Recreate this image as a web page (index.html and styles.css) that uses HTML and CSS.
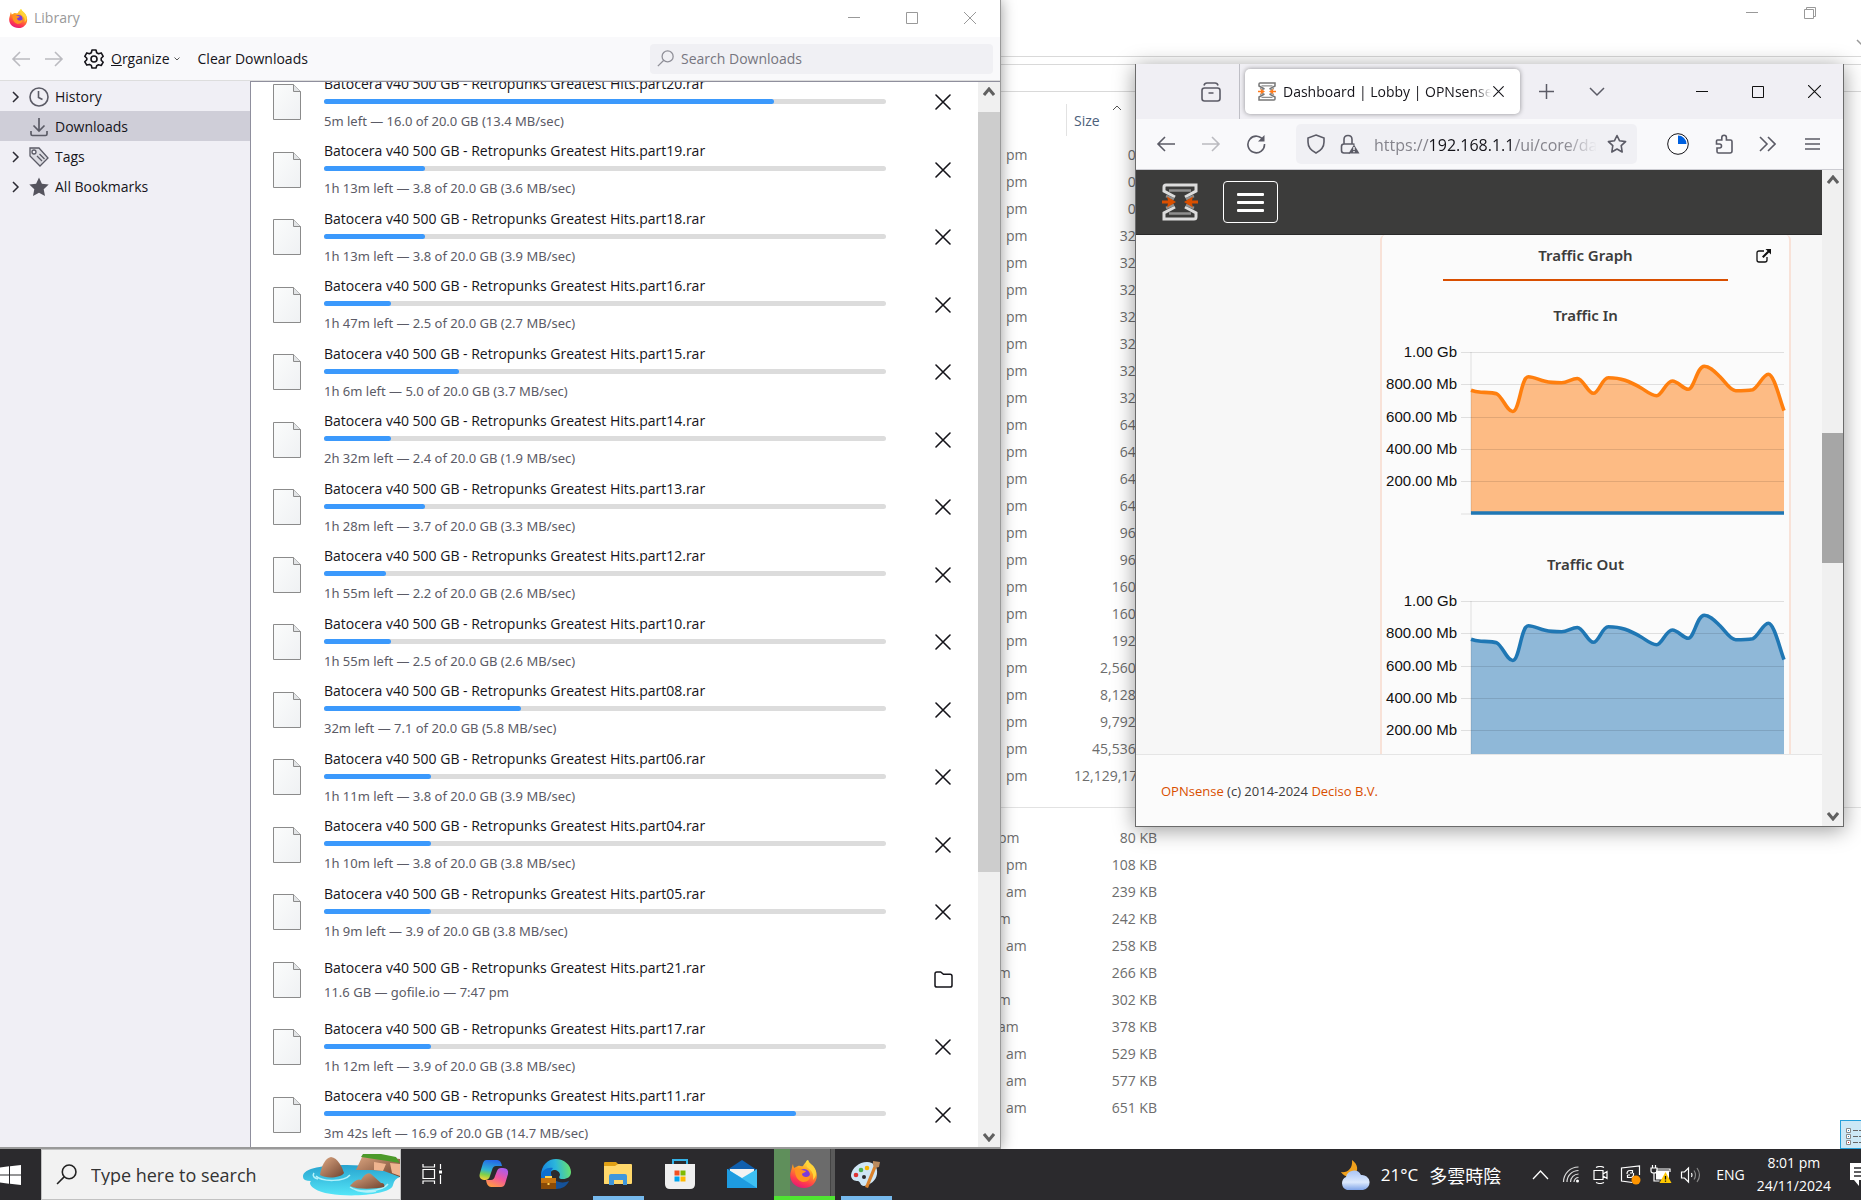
FILE: index.html
```html
<!DOCTYPE html>
<html lang="en">
<head>
    <meta charset="UTF-8">
    <meta name="viewport" content="width=device-width, initial-scale=1.0">
    <title>Desktop</title>
    <link rel="stylesheet" href="styles.css">
</head>
<body>
    <!-- shared shapes -->
    <svg class="defs" aria-hidden="true">
        <defs>
            <linearGradient id="ff-body" x1="0.7" y1="0" x2="0.3" y2="1">
                <stop offset="0" stop-color="#fff04a"/>
                <stop offset="0.4" stop-color="#ff9a1f"/>
                <stop offset="0.75" stop-color="#ff3b4e"/>
                <stop offset="1" stop-color="#e3167a"/>
            </linearGradient>
            <linearGradient id="page-fill" x1="0" y1="0" x2="1" y2="1">
                <stop offset="0" stop-color="#fbfcfc"/>
                <stop offset="1" stop-color="#eff1f3"/>
            </linearGradient>
            <symbol id="firefox" viewBox="0 0 28 28">
                <path fill="url(#ff-body)" d="M3 4c0 2 1 3 1 4l4-2c2-1 3 1 5 0 1-2 2-3 3-4 0-1 1-2 2-2 1 4 5 4 7 9 5 9-1 19-11 19S-2 20 1 11c1-3 1-5 2-7z"/>
                <circle cx="14" cy="15" r="6" fill="#7b3bdc"/>
                <path fill="#ff9420" d="M5 10c3-2 5-1 7 0l4 1c-1 2-4 2-4 3 0 2 2 3 4 3 2 0 4-1 4-3 1 5-2 8-7 8-5-1-8-5-8-12z"/>
                <path fill="#ffd43a" d="M17 4c1-2 1-3 1-4 1 4 5 5 7 9 2 4 1 8-2 11 1-6-1-9-5-12-1-1-2-2-1-4z"/>
            </symbol>
            <symbol id="page" viewBox="0 0 28 36">
                <path d="M.5.5h20l7 7v28H.5z" fill="url(#page-fill)" stroke="#8b8b8b"/>
                <path d="M20.500.5v7h7" fill="#e2e4e6" stroke="#8b8b8b"/>
            </symbol>
            <symbol id="x" viewBox="0 0 16 16">
                <path d="M1 1l14 14M15 1L1 15" fill="none" stroke="currentColor" stroke-width="1.600" stroke-linecap="round"/>
            </symbol>
            <symbol id="folder" viewBox="0 0 20 18">
                <path d="M3 1h4l3 2.500h7q2 0 2 2V15q0 2-2 2H3q-2 0-2-2V3q0-2 2-2z" fill="none" stroke="currentColor" stroke-width="1.600"/>
            </symbol>
            <symbol id="left" viewBox="0 0 20 18">
                <path d="M19 9H2M9 2L2 9l7 7" fill="none" stroke="currentColor" stroke-width="1.600"/>
            </symbol>
            <symbol id="right" viewBox="0 0 20 18">
                <path d="M1 9h17M11 2l7 7-7 7" fill="none" stroke="currentColor" stroke-width="1.600"/>
            </symbol>
            <symbol id="lens" viewBox="0 0 20 20">
                <circle cx="12.500" cy="7.500" r="6.500" fill="none" stroke="currentColor" stroke-width="1.500"/>
                <path d="M8 12l-7 7" stroke="currentColor" stroke-width="1.500"/>
            </symbol>
            <symbol id="win-min" viewBox="0 0 12 12"><path d="M0 5.500h12" stroke="currentColor"/></symbol>
            <symbol id="win-max" viewBox="0 0 12 12"><path d="M.5.5h11v11H.5z" fill="none" stroke="currentColor"/></symbol>
            <symbol id="win-close" viewBox="0 0 12 12"><path d="M0 0l12 12M12 0L0 12" stroke="currentColor"/></symbol>
            <symbol id="win-restore" viewBox="0 0 12 12"><path d="M.5 2.500h9v9h-9zM2.500 2.500v-2h9v9h-2" fill="none" stroke="currentColor"/></symbol>
            <symbol id="scroll-up" viewBox="0 0 12 10"><path d="M1 8l5-6 5 6" fill="none" stroke="#606060" stroke-width="3"/></symbol>
            <symbol id="scroll-down" viewBox="0 0 12 10"><path d="M1 2l5 6 5-6" fill="none" stroke="#606060" stroke-width="3"/></symbol>
            <symbol id="twisty" viewBox="0 0 8 12"><path d="M1 1l5 5-5 5" fill="none" stroke="#2b2a33" stroke-width="1.500"/></symbol>
            <symbol id="opn" viewBox="0 0 36 38">
                <path d="M13 14L2 8V4q0-2 2-2h30v6l-11 6M13 24L2 30v6h30q2 0 2-2v-4l-11-6" fill="none" stroke="var(--frame)" stroke-width="3"/>
                <path d="M7 7.500h22M7 30.500h22M4 13l8 3M32 13l-8 3M4 25l8-3M32 25l-8-3" stroke="#8f8f8f" stroke-width="2.500"/>
                <path d="M0 17.500h6l-1-4 9 5.500-9 5.500 1-4H0zM36 17.500h-6l1-4-9 5.500 9 5.500-1-4h6z" fill="var(--arrow)"/>
            </symbol>
            <g id="grid">
                <path d="M79 12.500h323M79 44.500h323M79 77.500h323M79 109.500h323M79 141.500h323M79 174h323M89 12v162" stroke="rgba(0,0,0,0.110)"/>
                <g font-size="15" text-anchor="end" fill="#111">
                    <text x="75" y="17">1.00 Gb</text>
                    <text x="75" y="49">800.00 Mb</text>
                    <text x="75" y="82">600.00 Mb</text>
                    <text x="75" y="114">400.00 Mb</text>
                    <text x="75" y="146">200.00 Mb</text>
                </g>
            </g>
            <path id="curve" d="M89 50.300C91 51 94 51.800 99 52.200 104 52.500 111 52.500 114.700 53.800 120 56 125 71.500 130.700 71.500 137.500 71.500 139 36.700 146.300 36.700 152 36.700 157 40 163 41.300 168 42.500 174 42.800 179.700 42.800 185 42.800 190 38.500 195.300 38.500 201 38.500 206 53.300 211.300 53.300 217 53.300 220 37.700 226.300 37.700 232 37.700 238 38.500 243 40.300 248 42 253 44.500 258.700 47.700 264 50.700 269 55.700 274.700 55.700 280 55.700 284 41 290.300 41 296 41 301 49.300 306.300 49.300 312 49.300 315 26.300 322.300 26.300 328 26.300 333 32 338 36.700 343 41.500 348 50.700 353.700 50.700 359 50.700 365 50.700 370.700 49.700 376 48 381 34.300 386.300 34.300 392 34.300 397 57 402 70.700"/>
            <path id="area" d="M89 50.300C91 51 94 51.800 99 52.200 104 52.500 111 52.500 114.700 53.800 120 56 125 71.500 130.700 71.500 137.500 71.500 139 36.700 146.300 36.700 152 36.700 157 40 163 41.300 168 42.500 174 42.800 179.700 42.800 185 42.800 190 38.500 195.300 38.500 201 38.500 206 53.300 211.300 53.300 217 53.300 220 37.700 226.300 37.700 232 37.700 238 38.500 243 40.300 248 42 253 44.500 258.700 47.700 264 50.700 269 55.700 274.700 55.700 280 55.700 284 41 290.300 41 296 41 301 49.300 306.300 49.300 312 49.300 315 26.300 322.300 26.300 328 26.300 333 32 338 36.700 343 41.500 348 50.700 353.700 50.700 359 50.700 365 50.700 370.700 49.700 376 48 381 34.300 386.300 34.300 392 34.300 397 57 402 70.700V174H89z"/>
        </defs>
    </svg>

    <main class="desktop">
        <!-- file explorer, behind the other windows -->
        <section class="explorer">
            <div class="explorer-title">
                <button aria-label="Minimize"><svg width="12" height="12"><use href="#win-min"/></svg></button>
                <button aria-label="Restore"><svg width="12" height="12"><use href="#win-restore"/></svg></button>
            </div>
            <div class="explorer-ribbon">
                <svg width="10" height="8" viewBox="0 0 10 8"><path d="M1 1l5 5 5-5" fill="none" stroke="#999" stroke-width="1.500"/></svg>
            </div>
            <div class="explorer-gap"></div>
            <div class="explorer-path"></div>
            <table class="files">
                <thead>
                    <tr>
                        <th class="col-date"></th>
                        <th class="col-size"><svg class="sort" width="10" height="6" viewBox="0 0 10 6"><path d="M1 5l4-4 4 4" fill="none" stroke="#555"/></svg>Size</th>
                        <th></th>
                    </tr>
                </thead>
                <tbody id="files-top"></tbody>
                <tbody><tr class="divider"><td colspan="3"></td></tr></tbody>
                <tbody id="files-bottom"></tbody>
            </table>
            <div class="view-toggle">
                <svg width="20" height="20" viewBox="0 0 20 20">
                    <path d="M1.500 1.500h4v4h-4zM1.500 7.500h4v4h-4zM1.500 13.500h4v4h-4z" fill="#fff" stroke="#888"/>
                    <path d="M8 3.500h5M14 3.500h6M8 9.500h5M14 9.500h6M8 15.500h5M14 15.500h6" stroke="#666"/>
                    <path d="M3 3h1v1H3zM3 9h1v1H3z" fill="#2a7fb8"/><path d="M3 15h1v1H3z" fill="#c22"/>
                </svg>
            </div>
        </section>

        <!-- firefox downloads library -->
        <section class="library">
            <header class="lib-title">
                <svg width="19" height="19"><use href="#firefox"/></svg>
                <span>Library</span>
                <div class="lib-controls">
                    <button aria-label="Minimize"><svg width="12" height="12"><use href="#win-min"/></svg></button>
                    <button aria-label="Maximize"><svg width="12" height="12"><use href="#win-max"/></svg></button>
                    <button aria-label="Close"><svg width="12" height="12"><use href="#win-close"/></svg></button>
                </div>
            </header>
            <div class="lib-toolbar">
                <button class="dim" aria-label="Back"><svg width="20" height="18"><use href="#left"/></svg></button>
                <button class="dim" aria-label="Forward"><svg width="20" height="18"><use href="#right"/></svg></button>
                <button class="organize">
                    <svg width="20" height="20" viewBox="0 0 20 20" fill="none" stroke="#15141a" stroke-width="1.600" stroke-linejoin="round">
                        <path d="M8 1h4l.7 2.700 1.800 1 2.700-.8 2 3.400-2 2v1.900l2 2-2 3.300-2.700-.7-1.800 1L12 19H8l-.7-2.600-1.800-1-2.700.7-2-3.300 2-2V9.300l-2-2 2-3.400 2.700.8 1.800-1z"/>
                        <circle cx="10" cy="10" r="3"/>
                    </svg>
                    <span><u>O</u>rganize</span>
                    <svg width="6" height="4" viewBox="0 0 6 4"><path d="M.5.5L3 3 5.500.5" fill="none" stroke="#555"/></svg>
                </button>
                <button class="clear">Clear Downloads</button>
                <label class="lib-search">
                    <svg width="17" height="17"><use href="#lens"/></svg>
                    <input type="text" placeholder="Search Downloads" aria-label="Search Downloads">
                </label>
            </div>
            <div class="lib-body">
                <nav class="tree">
                    <a href="#"><svg class="twisty" width="8" height="12"><use href="#twisty"/></svg>
                        <svg width="20" height="20" viewBox="0 0 20 20" fill="none" stroke="#5b5b66" stroke-width="1.600"><circle cx="10" cy="10" r="9"/><path d="M9.500 4v6.500l4 2"/></svg>History</a>
                    <a href="#" class="current"><i class="twisty"></i>
                        <svg width="20" height="20" viewBox="0 0 20 20" fill="none" stroke="#5b5b66" stroke-width="1.700"><path d="M10 1v13M4.500 8.500L10 14l5.500-5.500M2 14v3q0 1.500 1.500 1.500h13Q18 18.500 18 17v-3"/></svg>Downloads</a>
                    <a href="#"><svg class="twisty" width="8" height="12"><use href="#twisty"/></svg>
                        <svg width="20" height="20" viewBox="0 0 20 20" fill="#dcdce2" stroke="#5b5b66" stroke-width="1.300"><path d="M1 1h9l9 10-8 8L1 9z"/><circle cx="5" cy="5" r="2" fill="#f0eff5"/><path d="M8 9l5 5M10.500 7l5 5"/></svg>Tags</a>
                    <a href="#"><svg class="twisty" width="8" height="12"><use href="#twisty"/></svg>
                        <svg width="20" height="20" viewBox="0 0 20 20" fill="#55545e"><path d="M10 .5l2.900 6.200 6.800.8-5 4.700 1.300 6.800-6-3.300L4 19l1.300-6.800-5-4.700 6.800-.8z"/></svg>All Bookmarks</a>
                </nav>
                <ul class="downloads" id="downloads"></ul>
                <div class="scrollbar lib-scroll">
                    <svg width="12" height="10"><use href="#scroll-up"/></svg>
                    <div class="thumb"></div>
                    <svg class="end" width="12" height="10"><use href="#scroll-down"/></svg>
                </div>
            </div>
        </section>

        <!-- OPNsense dashboard -->
        <section class="browser">
            <header class="tabs">
                <div class="view-pin">
                    <button aria-label="Firefox View">
                        <svg width="20" height="20" viewBox="0 0 20 20" fill="none" stroke="#5b5b66" stroke-width="1.600"><rect x="1" y="6" width="18" height="13" rx="2.500"/><path d="M3 3.500Q3.500 1 6 1h8q2.500 0 3 2.500M7.500 11h5"/></svg>
                    </button>
                </div>
                <div class="tab">
                    <svg class="fav" width="18" height="19"><use href="#opn"/></svg>
                    <span>Dashboard | Lobby | OPNsense.localdomain</span>
                    <button aria-label="Close tab"><svg width="11" height="11"><use href="#x"/></svg></button>
                </div>
                <button class="new-tab" aria-label="New tab"><svg width="15" height="15" viewBox="0 0 15 15"><path d="M7.500 0v15M0 7.500h15" stroke="#5b5b66" stroke-width="1.500"/></svg></button>
                <button class="all-tabs" aria-label="List all tabs"><svg width="16" height="10" viewBox="0 0 16 10"><path d="M1 1l7 7 7-7" fill="none" stroke="#5b5b66" stroke-width="1.500"/></svg></button>
                <div class="win-controls">
                    <button aria-label="Minimize"><svg width="12" height="12"><use href="#win-min"/></svg></button>
                    <button aria-label="Maximize"><svg width="12" height="12"><use href="#win-max"/></svg></button>
                    <button aria-label="Close"><svg width="13" height="13"><use href="#win-close"/></svg></button>
                </div>
            </header>
            <div class="nav">
                <button aria-label="Back"><svg width="20" height="18"><use href="#left"/></svg></button>
                <button class="dim" aria-label="Forward"><svg width="20" height="18"><use href="#right"/></svg></button>
                <button aria-label="Reload"><svg width="20" height="20" viewBox="0 0 20 20"><path d="M17.500 6.500A8.300 8.300 0 1 0 18.500 10" fill="none" stroke="#5b5b66" stroke-width="1.600"/><path d="M18.500 1v6.500H12z" fill="#5b5b66"/></svg></button>
                <div class="urlbar">
                    <svg width="20" height="20" viewBox="0 0 20 20" fill="none" stroke="#5b5b66" stroke-width="1.600"><path d="M10 1l8 3v4c0 5-3 8.500-8 11-5-2.500-8-6-8-11V4z"/></svg>
                    <svg width="20" height="20" viewBox="0 0 20 20" fill="none" stroke="#5b5b66" stroke-width="1.600"><path d="M10 19H4q-2.500 0-2.500-2.500v-4Q1.500 10 4 10h9q1 0 1.500.5M4 10V5.500q0-4 4-4t4 4V10"/><path d="M14 10.500l5.500 9h-11z" fill="#5b5b66" stroke="none"/><path d="M14 13v3M14 17v1.300" stroke="#fff" stroke-width="1.300"/></svg>
                    <a class="url" href="#">https://<b>192.168.1.1</b>/ui/core/dashboard</a>
                    <button aria-label="Bookmark"><svg width="20" height="20" viewBox="0 0 20 20" fill="none" stroke="#5b5b66" stroke-width="1.600" stroke-linejoin="round"><path d="M10 1.500l2.600 5.300 6 .8-4.400 4 1 6.400-5.200-3L4.800 18l1-6.400-4.400-4 6-.8z"/></svg></button>
                </div>
                <button aria-label="Downloads"><svg width="22" height="22" viewBox="0 0 22 22"><circle cx="11" cy="11" r="10.300" fill="#fff" stroke="#15141a"/><path d="M11 2.500a8.500 8.500 0 0 1 8.500 8.500H11z" fill="#0061e0"/></svg></button>
                <button aria-label="Extensions"><svg width="20" height="20" viewBox="0 0 20 20" fill="none" stroke="#5b5b66" stroke-width="1.600"><path d="M3.500 6h4.300V3.500a2.300 2.300 0 0 1 4.600 0V6h4q1.600 0 1.600 1.600V17q0 2-2 2H4.500Q3 19 3 17.500V14h2.500a2 2 0 0 0 0-4H2.500V7q0-1 1-1z"/></svg></button>
                <button aria-label="More tools"><svg width="17" height="16" viewBox="0 0 17 16" fill="none" stroke="#5b5b66" stroke-width="1.600"><path d="M1 1l7 7-7 7M9 1l7 7-7 7"/></svg></button>
                <button class="menu" aria-label="Menu"><svg width="15" height="14" viewBox="0 0 15 14"><path d="M0 2h15M0 7h15M0 12h15" stroke="#5b5b66" stroke-width="1.600"/></svg></button>
            </div>
            <div class="viewport">
                <div class="page">
                    <div class="navbar">
                        <svg class="brand" width="36" height="38"><use href="#opn"/></svg>
                        <button class="toggle" aria-label="Toggle navigation"><i></i><i></i><i></i></button>
                    </div>
                    <div class="content">
                        <article class="card">
                            <div class="card-head">
                                <h2>Traffic Graph</h2>
                                <a href="#" aria-label="Open"><svg width="15" height="14" viewBox="0 0 15 14"><path d="M8 2H3Q1 2 1 4v7q0 2 2 2h6q2 0 2-2V8" fill="none" stroke="#111" stroke-width="1.300"/><path d="M9.500 0H15v5.500l-2-2-5.500 5.500L6 7.500 11.500 2z" fill="#111"/></svg></a>
                            </div>
                            <h3>Traffic In</h3>
                            <svg class="chart" viewBox="0 0 407 184">
                                <use href="#area" fill="#fdbb84"/>
                                <use href="#grid"/>
                                <use href="#curve" fill="none" stroke="#ff7f0e" stroke-width="3.600"/>
                                <path d="M89 173h313" stroke="#1f77b4" stroke-width="3.600"/>
                            </svg>
                            <h3>Traffic Out</h3>
                            <svg class="chart" viewBox="0 0 407 184">
                                <use href="#area" fill="#8fb8d8"/>
                                <use href="#grid"/>
                                <use href="#curve" fill="none" stroke="#1f77b4" stroke-width="3.600"/>
                            </svg>
                        </article>
                    </div>
                    <footer><a href="#">OPNsense</a> (c) 2014-2024 <a href="#">Deciso B.V.</a></footer>
                </div>
                <div class="scrollbar page-scroll">
                    <svg width="12" height="10"><use href="#scroll-up"/></svg>
                    <div class="thumb"></div>
                    <svg class="end" width="12" height="10"><use href="#scroll-down"/></svg>
                </div>
            </div>
        </section>
    </main>

    <footer class="taskbar">
        <button class="start" aria-label="Start"><svg width="21" height="20" viewBox="0 0 21 20" fill="#fff"><path d="M0 2.500l9-1.200V9.500H0zM10 1.200L21 0v9.500H10zM0 10.500h9v8.200l-9-1.200zM10 10.500h11V20l-11-1.300z"/></svg></button>
        <label class="task-search">
            <svg width="21" height="21"><use href="#lens"/></svg>
            <input type="text" placeholder="Type here to search" aria-label="Type here to search">
            <svg class="sea" width="98" height="44" viewBox="0 0 98 44">
                <defs><linearGradient id="water" x1="0" y1="0" x2="0" y2="1"><stop offset="0" stop-color="#27a3cf"/><stop offset="1" stop-color="#55e6f8"/></linearGradient>
                <linearGradient id="rock" x1="0" y1="0" x2="1" y2="1"><stop offset="0" stop-color="#e0a983"/><stop offset="1" stop-color="#6f4330"/></linearGradient></defs>
                <path d="M1 24C0 15 22 12 45 12l53 2v10q-6 2-7 8c-2 12-64 14-78 4-5-3-6-6-4-8Q1 28 1 24z" fill="url(#water)"/>
                <path d="M14 23c6 6 28 6 34-1M12 20c-2 3 0 5 4 6M48 34c8 6 32 5 38-3M52 36c4 3 16 4 22 2" fill="none" stroke="#b5f2fa" stroke-width="1.500"/>
                <path d="M18 22c1-8 5-17 11-18 7 1 11 10 13 16-3 5-18 6-24 2z" fill="url(#rock)"/>
                <path d="M54 17l6-13 2-3 36 5v18l-16-6-12-1z" fill="url(#rock)"/>
                <path d="M72 9l12 2-3 7-9-1zM88 10l10 1v12l-8-3z" fill="#efb48f"/>
                <path d="M59 4l2-3 18 0 15 3 4 6c-12-2-26-4-39-6z" fill="#4c9a2b"/>
                <path d="M48 33c3-4 8-8 11-6 3-5 7-8 10-6l10 9c3 0 4 2 3 4-9 2-26 3-34-1z" fill="url(#rock)"/>
            </svg>
        </label>
        <nav class="apps">
            <button aria-label="Task View"><svg width="21" height="20" viewBox="0 0 21 20" fill="none" stroke="#fff" stroke-width="1.200"><path d="M1 5.500h11.500v9H1zM1 0v3h11.500V0M1 20v-3h11.500v3M18.500 0v5M18.500 11v9"/><path d="M17 6.500h3v3h-3z" fill="#fff" stroke="none"/></svg></button>
            <button aria-label="Copilot"><svg width="30" height="28" viewBox="0 0 30 28">
                <defs><linearGradient id="cp1" x1="0.500" y1="0" x2="0.300" y2="1"><stop offset="0" stop-color="#2468e8"/><stop offset="0.500" stop-color="#2fb4d4"/><stop offset="0.750" stop-color="#7ed04a"/><stop offset="1" stop-color="#f5d13a"/></linearGradient>
                <linearGradient id="cp2" x1="0.800" y1="0" x2="0.300" y2="1"><stop offset="0" stop-color="#a65cf0"/><stop offset="0.500" stop-color="#f0569f"/><stop offset="1" stop-color="#ff9a45"/></linearGradient></defs>
                <path d="M7 0h11q4 0 5 6h-6q-3 0-4 4l-2 6q-1 4-5 4H5Q-1 19 1 13L4 3q1-3 3-3z" fill="url(#cp1)"/>
                <path d="M24 8q6 0 5 6l-3 10q-1 3-4 3H12q-4 0-5-7h5q3 0 4-4l2-5q1-3 4-3z" fill="url(#cp2)"/></svg></button>
            <button aria-label="Edge"><svg width="30" height="30" viewBox="0 0 30 30">
                <defs><linearGradient id="ed" x1="0" y1="0.500" x2="1" y2="0.400"><stop offset="0" stop-color="#1586e0"/><stop offset="0.500" stop-color="#2bb6dc"/><stop offset="1" stop-color="#6ae36a"/></linearGradient></defs>
                <path d="M0 17C0 6 7 0 15 0s15 6 15 13c0 5-4 7-8 7-5 0-4-2-3-4 0-3-3-5-6-5s-5 4-5 8z" fill="url(#ed)"/>
                <path d="M0 17C1 11 6 8 12 9c-3 3-2 6-1 9l2 10H5Q0 24 0 17z" fill="#0d6fd0"/>
                <path d="M13 21c5 3 11 3 15 1-2 5-7 8-13 8z" fill="#15529a"/>
                <path d="M0 19h15v11H0z" fill="#c67410"/><path d="M0 24h15v6H0z" fill="#8a4b08"/><path d="M4 19v-2h7v2M6.500 24h2v2h-2z" fill="#ffd250"/></svg></button>
            <button class="open" aria-label="File Explorer"><svg width="28" height="24" viewBox="0 0 28 24">
                <path d="M0 1q0-1 1-1h11l2 2h13v20H0z" fill="#e0a014"/><path d="M0 4h11l3-2h13q1 0 1 1v18q0 1-1 1H1q-1 0-1-1z" fill="#ffd86b"/><path d="M5 14q0-2 2-2h14q2 0 2 2v9h-4v-5h-9v5H5z" fill="#3f97dc"/></svg></button>
            <button aria-label="Microsoft Store"><svg width="30" height="30" viewBox="0 0 30 30">
                <path d="M8 6V1h14v5" fill="none" stroke="#35b3e8" stroke-width="2"/><path d="M0 5h30v20q0 5-5 5H5q-5 0-5-5z" fill="#efefef"/>
                <path d="M9.500 11.500h5v5h-5z" fill="#f25022"/><path d="M15.500 11.500h5v5h-5z" fill="#7fba00"/><path d="M9.500 17.500h5v5h-5z" fill="#00a4ef"/><path d="M15.500 17.500h5v5h-5z" fill="#ffb900"/></svg></button>
            <button aria-label="Mail"><svg width="30" height="28" viewBox="0 0 30 28"><path d="M0 10L15 0l15 10z" fill="#0f5fae"/><path d="M3 9h24v9H3z" fill="#f3f3f3"/><path d="M0 9l15 9 15-9v19H0z" fill="#3ec0f3"/><path d="M0 9l30 19H0z" fill="#1e9be0"/></svg></button>
            <button class="active" aria-label="Firefox"><svg width="28" height="28"><use href="#firefox"/></svg></button>
            <button class="open" aria-label="Paint"><svg width="30" height="28" viewBox="0 0 30 28">
                <path d="M16 2c7 0 11 5 10 12-1 7-7 11-13 12-4 0-3-4-6-5-3 0-7-1-7-6C1 8 8 2 16 2z" fill="#cfe6f5"/>
                <circle cx="5" cy="15" r="2.300" fill="#d33"/><circle cx="10" cy="10" r="2.300" fill="#4caf50"/><circle cx="16" cy="8" r="2.300" fill="#f5b400"/><circle cx="13" cy="17" r="2" fill="#2b2b2e"/>
                <path d="M26 6L17 28l-3-1 9-22z" fill="#d9812b"/><path d="M22 1l7 1-1 5-4 1-2-3z" fill="#b98a5e"/></svg></button>
        </nav>
        <div class="tray">
            <button class="weather">
                <svg width="30" height="30" viewBox="0 0 30 30"><defs><linearGradient id="cl" x1="0" y1="0" x2="0" y2="1"><stop offset="0" stop-color="#a9c4f5"/><stop offset="0.600" stop-color="#dce9fd"/><stop offset="1" stop-color="#7fa4e8"/></linearGradient></defs>
                <path d="M12 0c6 4 7 11 2 15-4 3-10 2-13-3 6 1 12-3 11-12z" fill="#f0a01c"/><path d="M7 30a7 7 0 0 1-1-13 8 8 0 0 1 15-2 7.500 7.500 0 0 1 2 15z" fill="url(#cl)"/></svg>
                <span>21°C</span><span class="sky">多雲時陰</span>
            </button>
            <button class="more" aria-label="Show hidden icons"><svg width="17" height="10" viewBox="0 0 17 10"><path d="M1 9l7.500-8L16 9" fill="none" stroke="#fff" stroke-width="1.300"/></svg></button>
            <svg class="status-icon" height="17" viewBox="0 0 17 17" fill="none" stroke="#ddd" stroke-width="1.200"><path d="M1 16A15 15 0 0 1 16 1M4.500 16A11.500 11.500 0 0 1 16 4.500M8 16a8 8 0 0 1 8-8M11.500 16a4.500 4.500 0 0 1 4.500-4.500"/><circle cx="15" cy="15" r="1.500" fill="#fff" stroke="none"/></svg>
            <svg class="status-icon" height="18" viewBox="0 0 16 18" fill="none" stroke="#fff" stroke-width="1.200"><path d="M1 4.500h9v9H1zM10 8l4-2.500v7L10 10M3 1.500q4-2 8 0M3 16.500q4 2 8 0"/></svg>
            <svg class="status-icon" height="20" viewBox="0 0 21 20" fill="none" stroke="#fff" stroke-width="1.200"><path d="M12 17.500L1 16V3l18-2v9M6.500 9q0-3.500 3-3.500h2.500V8M12 8H9.500M13 8q.5 4.500-3 4.500H7V10M7 10h2.500"/><circle cx="15.500" cy="15" r="4.500" fill="#ff9500" stroke="none"/></svg>
            <svg class="status-icon" height="19" viewBox="0 0 21 19"><path d="M5.500 5.500h13v9h-13z" fill="#fff"/><path d="M7 4h12.500v3M2 0v3M5 0v3M.5 3h6v3q0 2-3 2t-3-2zM3.500 8v8H9" fill="none" stroke="#fff" stroke-width="1.200"/><path d="M15 7l6 11H9z" fill="#ffc800"/><path d="M15 11v3.500M15 15.500v1.300" stroke="#111" stroke-width="1.300"/></svg>
            <svg class="status-icon" height="18" viewBox="0 0 21 18" fill="none" stroke="#fff" stroke-width="1.200"><path d="M1 6h3l4-4v14l-4-4H1zM11 7q1 2 0 4"/><path d="M13.500 4.500q3 4.500 0 9M16.500 2q5 7 0 14" stroke="#888"/></svg>
            <span class="lang">ENG</span>
            <button class="clock"><span>8:01 pm</span><span>24/11/2024</span></button>
            <svg width="11" height="24" viewBox="0 0 11 24"><path d="M0 0h20v17H9v6l-5-6H0z" fill="#fff"/><path d="M4 5h10M4 9h10M4 13h10" stroke="#2b2b2e" stroke-width="1.500"/></svg>
        </div>
    </footer>

    <script>
        (function(d){
            // part number, status line, percent (-1 = finished)
            var items = [
                ['20', '5m left — 16.0 of 20.0 GB (13.4 MB/sec)', 80],
                ['19', '1h 13m left — 3.8 of 20.0 GB (3.6 MB/sec)', 18],
                ['18', '1h 13m left — 3.8 of 20.0 GB (3.9 MB/sec)', 18],
                ['16', '1h 47m left — 2.5 of 20.0 GB (2.7 MB/sec)', 12],
                ['15', '1h 6m left — 5.0 of 20.0 GB (3.7 MB/sec)', 24],
                ['14', '2h 32m left — 2.4 of 20.0 GB (1.9 MB/sec)', 12],
                ['13', '1h 28m left — 3.7 of 20.0 GB (3.3 MB/sec)', 18],
                ['12', '1h 55m left — 2.2 of 20.0 GB (2.6 MB/sec)', 11],
                ['10', '1h 55m left — 2.5 of 20.0 GB (2.6 MB/sec)', 12],
                ['08', '32m left — 7.1 of 20.0 GB (5.8 MB/sec)', 35],
                ['06', '1h 11m left — 3.8 of 20.0 GB (3.9 MB/sec)', 19],
                ['04', '1h 10m left — 3.8 of 20.0 GB (3.8 MB/sec)', 19],
                ['05', '1h 9m left — 3.9 of 20.0 GB (3.8 MB/sec)', 19],
                ['21', '11.6 GB — gofile.io — 7:47 pm', -1],
                ['17', '1h 12m left — 3.9 of 20.0 GB (3.8 MB/sec)', 19],
                ['11', '3m 42s left — 16.9 of 20.0 GB (14.7 MB/sec)', 84]
            ];
            var html = '', i, it, name, done;
            for (i = 0; i < items.length; i++) {
                it = items[i];
                done = it[2] < 0;
                name = 'Batocera v40 500 GB - Retropunks Greatest Hits.part' + it[0] + '.rar';
                html += '<li' + (done ? ' class="done"' : '') + '>' +
                    '<svg width="28" height="36"><use href="#page"/></svg>' +
                    '<div class="info"><span class="name">' + name + '</span>' +
                    (done ? '' : '<progress max="100" value="' + it[2] + '" aria-label="' + name + '"></progress>') +
                    '<span class="status">' + it[1] + '</span></div>' +
                    (done ? '<button aria-label="Show in folder"><svg width="19" height="17"><use href="#folder"/></svg></button>'
                          : '<button aria-label="Cancel"><svg width="16" height="16"><use href="#x"/></svg></button>') +
                    '</li>';
            }
            d.getElementById('downloads').innerHTML = html;

            function rows(id, list) {
                var out = '';
                list.forEach(function(r) {
                    out += '<tr><td class="col-date ' + (r[2] || '') + '">' + r[0] + '</td><td class="col-size">' + r[1] + ' KB</td><td></td></tr>';
                });
                d.getElementById(id).innerHTML = out;
            }
            rows('files-top', ['0', '0', '0', '32', '32', '32', '32', '32', '32', '32', '64', '64', '64', '64', '96', '96',
                '160', '160', '192', '2,560', '8,128', '9,792', '45,536', '12,129,170'].map(function(s) { return ['pm', s]; }));
            rows('files-bottom', [
                ['pm', '80', 'short'], ['pm', '108'], ['am', '239'], ['am', '242', 'shorter'], ['am', '258'],
                ['am', '266', 'shorter'], ['am', '302', 'shorter'], ['am', '378', 'short'], ['am', '529'], ['am', '577'], ['am', '651']
            ]);
        })(document);
    </script>
</body>
</html>
```
FILE: styles.css
```css
*{
    box-sizing: border-box;
}
body{
    margin: 0;
    height: 100vh;
    display: flex;
    flex-direction: column;
    overflow: hidden;
    font-family: "Open Sans", "Noto Sans", sans-serif;
    font-size: 14px;
    line-height: 20px;
    color: #15141a;
}
button{
    display: flex;
    align-items: center;
    justify-content: center;
    padding: 0;
    border: 0;
    background: none;
    font: inherit;
    color: inherit;
}
input{
    flex: 1;
    min-width: 0;
    padding: 0;
    border: 0;
    outline: 0;
    background: none;
    font: inherit;
}
svg{
    flex: none;
    display: block;
}
a{
    text-decoration: none;
    color: inherit;
}
.defs{
    position: absolute;
    width: 0;
    height: 0;
}
.desktop{
    position: relative;
    flex: 1;
    min-height: 0;
    overflow: hidden;
}

/* explorer */
.explorer{
    position: absolute;
    inset: 0;
    background: #fff;
    overflow: hidden;
}
.explorer-title{
    display: flex;
    justify-content: flex-end;
    gap: 46px;
    height: 26px;
    padding-right: 45px;
    color: #999;
}
.explorer-ribbon{
    display: flex;
    justify-content: flex-end;
    height: 31px;
    padding-top: 13px;
    margin-right: -5px;
    border-bottom: 1px solid #d9d9d9;
}
.explorer-gap{
    height: 8px;
    border-bottom: 1px solid #d9d9d9;
}
.explorer-path{
    height: 27px;
    border-bottom: 1px solid #d9d9d9;
}
.files{
    width: 881px;
    margin-left: auto;
    table-layout: fixed;
    border-collapse: collapse;
    color: #6d6d6d;
}
.files th{
    height: 49px;
    padding: 8px 0 0;
    font-weight: normal;
    text-align: left;
    color: #4c607a;
}
.files td{
    height: 27px;
    padding: 0;
    white-space: nowrap;
    overflow: hidden;
}
.files .col-date{
    width: 94px;
    padding-left: 26px;
}
.files .short{
    padding-left: 18px;
}
.files .shorter{
    padding-left: 10px;
}
.files .col-size{
    width: 83px;
}
.files td.col-size{
    text-align: right;
}
.files th.col-date{
    background: linear-gradient(#e2e2e2, #e2e2e2) no-repeat 86px 12px / 1px 32px;
}
.files th.col-size{
    position: relative;
}
.sort{
    position: absolute;
    left: 38px;
    top: 13px;
}
.files .divider td{
    height: 35px;
    background: linear-gradient(#e2e2e2, #e2e2e2) no-repeat 0 18px / 100% 1px;
}
.view-toggle{
    position: absolute;
    right: 0;
    bottom: 0;
    width: 21px;
    height: 29px;
    padding: 6px 0 0 4px;
    overflow: hidden;
    background: #cce8f6;
    border: 1px solid #26a0da;
    border-right: 0;
}

/* library window */
.library{
    position: absolute;
    left: 0;
    top: 0;
    right: 860px;
    bottom: 0;
    display: flex;
    flex-direction: column;
    background: #fff;
    border-right: 1px solid #999;
    border-bottom: 2px solid #999;
    box-shadow: 0 0 14px rgba(0, 0, 0, 0.4);
}
.lib-title{
    display: flex;
    align-items: center;
    gap: 6px;
    height: 37px;
    padding: 0 24px 1px 9px;
    color: #999;
}
.lib-controls{
    display: flex;
    gap: 46px;
    margin-left: auto;
}
.lib-toolbar{
    display: flex;
    align-items: center;
    height: 44px;
    padding: 0 7px 0 11px;
    background: #f9f9fb;
    border-bottom: 1px solid #ddd;
}
.lib-toolbar button{
    margin-right: 13px;
}
.dim{
    color: #bbbbc0;
}
.lib-toolbar .organize{
    gap: 7px;
    margin: 0 18px 0 7px;
}
.organize svg:last-child{
    margin-left: -3px;
}
.lib-search{
    display: flex;
    align-items: center;
    gap: 7px;
    width: 343px;
    height: 30px;
    margin-left: auto;
    padding-left: 7px;
    border-radius: 4px;
    background: #f0f0f4;
    color: #8f8f98;
}
.lib-search input::placeholder{
    color: #77767f;
}
.lib-body{
    display: flex;
    flex: 1;
    min-height: 0;
}
.tree{
    width: 250px;
    background: #f0eff5;
}
.tree a{
    display: flex;
    align-items: center;
    gap: 6px;
    height: 30px;
    padding: 1px 0 0 12px;
}
.tree .twisty{
    width: 8px;
    margin-right: 3px;
}
.tree .current{
    background: #cfced8;
}
.downloads{
    flex: 1;
    min-width: 0;
    margin: 0;
    padding: 0;
    overflow: hidden;
    list-style: none;
    border-top: 1px solid #8f8f9d;
    border-left: 1px solid #8f8f9d;
}
.downloads li{
    display: flex;
    align-items: center;
    height: 68px;
    padding: 0 25px 0 22px;
}
.downloads li:nth-child(even){
    height: 67px;
}
.downloads li:first-child{
    margin-top: -14px;
}
.info{
    display: flex;
    flex: 1;
    flex-direction: column;
    min-width: 0;
    margin: 0 47px 0 23px;
}
.name, .status{
    white-space: nowrap;
}
.status{
    padding-top: 7px;
    font-family: "Noto Sans", sans-serif;
    font-size: 13px;
    color: #5b5b66;
}
.done .status{
    padding-top: 4px;
}
progress{
    width: 100%;
    height: 5px;
    margin-top: 5px;
    appearance: none;
    border: 0;
}
progress::-webkit-progress-bar{
    border-radius: 3px;
    background: #dcdcdc;
}
progress::-webkit-progress-value{
    border-radius: 3px;
    background: #3b99fc;
}
.downloads button{
    width: 20px;
}

/* scrollbars */
.scrollbar{
    display: flex;
    flex-direction: column;
    align-items: center;
    width: 22px;
    padding: 5px 0;
    background: #f0f0f0;
}
.scrollbar .thumb{
    width: 100%;
}
.scrollbar .end{
    margin-top: auto;
}
.lib-scroll{
    border-top: 1px solid #8f8f9d;
}
.lib-scroll .thumb{
    height: 72%;
    margin-top: 15px;
    background: #cdcdcd;
}
.page-scroll{
    width: 21px;
}
.page-scroll .thumb{
    height: 20%;
    margin-top: auto;
    background: #a6a6a6;
}

/* browser window */
.browser{
    position: absolute;
    left: 1135px;
    right: 17px;
    top: 64px;
    bottom: 322px;
    display: flex;
    flex-direction: column;
    border: 1px solid #6b6b6b;
    border-top: 0;
    background: #f9f9fb;
    box-shadow: 0 3px 20px rgba(0, 0, 0, 0.4);
}
.tabs{
    display: flex;
    align-items: center;
    height: 55px;
    padding-right: 22px;
    background: #f0eff4;
}
.view-pin{
    display: flex;
    align-items: center;
    justify-content: flex-end;
    width: 104px;
    height: 100%;
    padding-right: 18px;
    border-right: 1px solid #bfbfc6;
}
.tab{
    display: flex;
    align-items: center;
    width: 275px;
    height: 45px;
    margin-left: 5px;
    padding: 0 16px 0 13px;
    border-radius: 5px;
    background: #fff;
    box-shadow: 0 0 5px rgba(0, 0, 0, 0.4);
}
.fav{
    --frame: #777;
    --arrow: #ff7a1a;
}
.tab span{
    flex: 1;
    margin: 0 2px 0 7px;
    overflow: hidden;
    white-space: nowrap;
    mask-image: linear-gradient(to right, #000 92%, transparent);
}
.new-tab{
    margin-left: 19px;
}
.all-tabs{
    margin-left: 35px;
}
.win-controls{
    display: flex;
    gap: 44px;
    margin-left: auto;
    color: #111;
}
.nav{
    display: flex;
    align-items: center;
    height: 51px;
    padding: 0 23px 0 20px;
    gap: 25px;
    background: #f9f9fb;
    border-bottom: 1px solid #ccccd2;
    color: #5b5b66;
}
.nav .dim{
    color: #bbbbc0;
}
.nav .menu{
    margin-left: 4px;
}
.urlbar{
    display: flex;
    flex: 1;
    align-items: center;
    gap: 14px;
    min-width: 0;
    height: 40px;
    margin: 0 5px;
    padding: 0 10px;
    border-radius: 5px;
    background: #f0f0f4;
}
.url{
    flex: 1;
    margin-right: -4px;
    padding-top: 2px;
    overflow: hidden;
    white-space: nowrap;
    font-size: 16px;
    color: #85848c;
    mask-image: linear-gradient(to right, #000 85%, transparent);
}
.url b{
    font-weight: normal;
    color: #15141a;
}
.viewport{
    display: flex;
    flex: 1;
    min-height: 0;
}
.page{
    display: flex;
    flex: 1;
    flex-direction: column;
    min-width: 0;
    background: #f7f7f7;
    color: #3c3c3b;
}
.navbar{
    display: flex;
    align-items: center;
    gap: 25px;
    height: 65px;
    padding-left: 26px;
    background: #3c3c3b;
    border-bottom: 1px solid #2a2a2a;
}
.brand{
    --frame: #dcdcdc;
    --arrow: #d94f00;
}
.toggle{
    flex-direction: column;
    gap: 5px;
    width: 55px;
    height: 42px;
    border: 1px solid #fff;
    border-radius: 4px;
}
.toggle i{
    width: 27px;
    height: 3px;
    border-radius: 1px;
    background: #fff;
}
.content{
    flex: 1;
    min-height: 0;
    overflow: hidden;
}
.card{
    width: 411px;
    margin: 0 31px 0 auto;
    border: 2px solid #f8e2d8;
    border-top: 0;
    border-radius: 5px;
    background: #fbfbfb;
}
.card-head{
    display: grid;
    grid-template-columns: 61px 1fr 61px;
    align-items: start;
}
.card-head h2{
    grid-column: 2;
}
.card-head a{
    padding: 14px 0 0 28px;
}
.card h2, .card h3{
    margin: 0;
    font-family: "Noto Sans", sans-serif;
    font-size: 15px;
    font-weight: 600;
    text-align: center;
}
.card h2{
    height: 46px;
    padding-top: 10px;
    border-bottom: 2px solid #d94f00;
}
.card h3{
    padding: 24px 0 15px;
    height: 59px;
}
.card .chart + h3{
    height: 65px;
    padding-top: 30px;
}
.chart{
    width: 100%;
    font-family: "Liberation Sans", Arial, sans-serif;
}
.page footer{
    height: 72px;
    padding: 26px 25px;
    border-top: 1px solid #e5e5e5;
    background: #fbfbfb;
    font-size: 13px;
}
.page footer a{
    color: #d94f00;
}

/* taskbar */
.taskbar{
    display: flex;
    height: 51px;
    background: #2b2a2d;
    color: #fff;
}
.start{
    width: 41px;
    justify-content: flex-start;
}
.task-search{
    display: flex;
    align-items: center;
    gap: 14px;
    width: 360px;
    padding-left: 14px;
    overflow: hidden;
    border: 1px solid #c2c2c2;
    background: #f2f2f2;
    font-size: 18px;
    color: #222;
}
.task-search input::placeholder{
    color: #333;
}
.apps{
    display: flex;
}
.apps button{
    width: 62px;
    padding-bottom: 1px;
}
.apps .open{
    background: linear-gradient(#76b9ed, #76b9ed) no-repeat center bottom / 51px 4px;
}
.apps .active{
    background:
        linear-gradient(#4fe432, #4fe432) no-repeat 1px bottom / 61px 4px,
        linear-gradient(to right, transparent 1px, #5f8f5b 1px 17px, #6b6b6b 17px 57px, #444 57px 58px, #5a5a5a 58px);
}
.tray{
    display: flex;
    align-items: center;
    margin-left: auto;
}
.weather{
    gap: 11px;
    margin-right: 23px;
    font-size: 17px;
}
.sky{
    font-family: "Noto Sans CJK TC", sans-serif;
    font-size: 18px;
}
.more{
    width: 32px;
}
.status-icon{
    width: 30px;
}
.lang{
    margin: 0 12px 0 10px;
}
.clock{
    flex-direction: column;
    line-height: 23px;
    padding-bottom: 1px;
    margin-right: 19px;
}
```
